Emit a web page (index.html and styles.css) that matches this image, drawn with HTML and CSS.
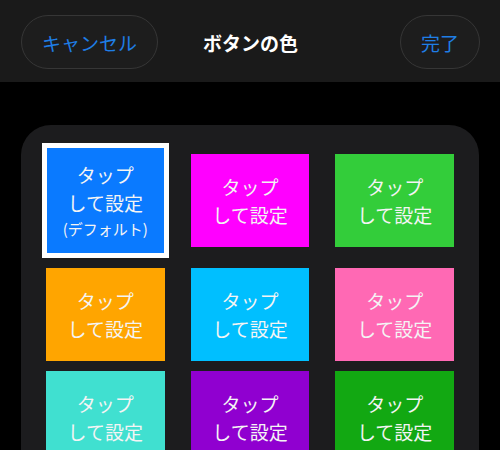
FILE: index.html
```html
<!DOCTYPE html>
<html lang="ja">
<head>
<meta charset="utf-8">
<link rel="stylesheet" href="styles.css">
</head>
<body>
<header class="bar">
  <div class="bar-left"><button class="pill pill-cancel">キャンセル</button></div>
  <div class="title">ボタンの色</div>
  <div class="bar-right"><button class="pill pill-done">完了</button></div>
</header>
<main class="content">
  <section class="card">
    <div class="tile selected c-blue"><span>タップ</span><span>して設定</span><span class="small">(デフォルト)</span></div>
    <div class="tile c-magenta"><span>タップ</span><span>して設定</span></div>
    <div class="tile c-lime"><span>タップ</span><span>して設定</span></div>
    <div class="tile c-orange"><span>タップ</span><span>して設定</span></div>
    <div class="tile c-sky"><span>タップ</span><span>して設定</span></div>
    <div class="tile c-pink"><span>タップ</span><span>して設定</span></div>
    <div class="tile c-turq"><span>タップ</span><span>して設定</span></div>
    <div class="tile c-violet"><span>タップ</span><span>して設定</span></div>
    <div class="tile c-green"><span>タップ</span><span>して設定</span></div>
  </section>
</main>
</body>
</html>
```

FILE: styles.css
```css
html, body {
  margin: 0;
  padding: 0;
  background: #000;
  width: 500px;
  height: 450px;
  overflow: hidden;
  font-family: "Noto Sans CJK JP", "Noto Sans", sans-serif;
}
.bar {
  height: 82px;
  background: #1a1a1a;
  display: grid;
  grid-template-columns: 1fr auto 1fr;
  align-items: center;
  padding: 0 20px 0 21px;
  box-sizing: border-box;
}
.bar-left { justify-self: start; }
.bar-right { justify-self: end; }
.pill {
  height: 54px;
  border-radius: 27px;
  border: 1px solid #363636;
  background: #1d1d1d;
  color: #1f7ee6;
  font-family: "Noto Sans CJK JP", sans-serif;
  font-size: 19px;
  padding: 0;
  margin-top: 2px;
  display: flex;
  align-items: center;
  justify-content: center;
  box-sizing: border-box;
}
.pill-cancel { width: 137px; }
.pill-done { width: 80px; }
.title {
  color: #fff;
  font-size: 19px;
  font-weight: 700;
  margin-top: 2px;
}
.content {
  padding: 43px 21px 0 21px;
}
.card {
  background: #1c1c1e;
  border-radius: 30px;
  padding: 18px 25px 30px 25px;
  display: grid;
  grid-template-columns: repeat(3, 1fr);
  column-gap: 26px;
  row-gap: 10px;
}
.tile {
  height: 93px;
  align-self: center;
  display: flex;
  flex-direction: column;
  align-items: center;
  justify-content: center;
  color: #f4f4f4;
  font-size: 19px;
  line-height: 28px;
}
.tile.selected {
  height: 115px;
  margin: 0 -4px;
  border: 5px solid #fff;
  box-sizing: border-box;
}
.tile .small {
  font-size: 15px;
  line-height: 24px;
}
.c-blue { background: #0a7aff; }
.c-magenta { background: #ff00ff; }
.c-lime { background: #33cd3a; }
.c-orange { background: #ffa500; }
.c-sky { background: #00bfff; }
.c-pink { background: #ff69b4; }
.c-turq { background: #40e0d0; }
.c-violet { background: #9000d0; }
.c-green { background: #12a812; }
```
